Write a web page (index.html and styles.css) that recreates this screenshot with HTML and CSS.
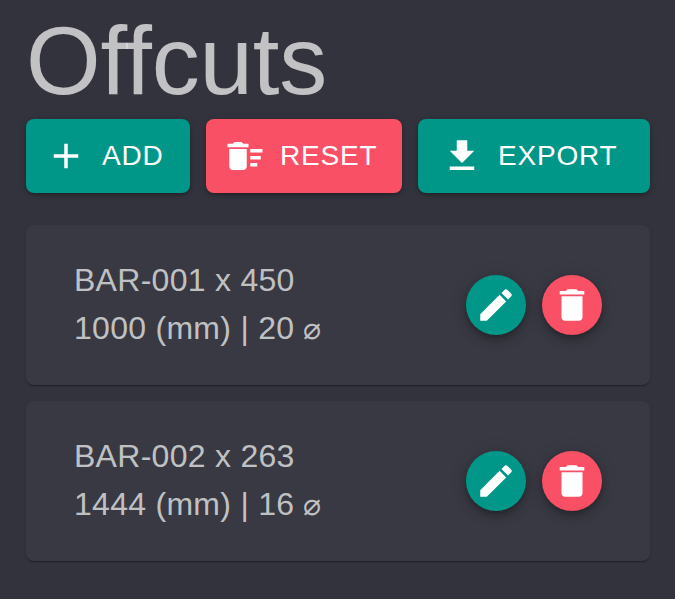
FILE: index.html
```html
<!DOCTYPE html>
<html lang="en">
<head>
<meta charset="utf-8">
<title>Offcuts</title>
<link rel="stylesheet" href="styles.css">
</head>
<body>
<main class="page">
  <h1 class="title">Offcuts</h1>
  <div class="actions">
    <button class="btn btn-teal btn-add"><svg class="icon" viewBox="0 0 24 24"><path d="M19 13h-6v6h-2v-6H5v-2h6V5h2v6h6v2z"/></svg><span>ADD</span></button>
    <button class="btn btn-red btn-reset"><svg class="icon" viewBox="0 0 24 24"><path d="M15 16h4v2h-4zm0-8h7v2h-7zm0 4h6v2h-6zM3 18c0 1.1.9 2 2 2h6c1.1 0 2-.9 2-2V8H3v10zM14 5h-3l-1-1H6L5 5H2v2h12z"/></svg><span>RESET</span></button>
    <button class="btn btn-teal btn-export"><svg class="icon" viewBox="0 0 24 24"><path d="M19 9h-4V3H9v6H5l7 7 7-7zM5 18v2h14v-2H5z"/></svg><span>EXPORT</span></button>
  </div>
  <section class="card">
    <div class="info">
      <div>BAR-001 x 450</div>
      <div>1000 (mm) | 20 <span class="dia">⌀</span></div>
    </div>
    <div class="fabs">
      <button class="fab btn-teal"><svg class="icon" viewBox="0 0 24 24"><path d="M3 17.25V21h3.75L17.81 9.94l-3.75-3.75L3 17.25zM20.71 7.04c.39-.39.39-1.02 0-1.41l-2.34-2.34c-.39-.39-1.02-.39-1.41 0l-1.83 1.83 3.75 3.75 1.83-1.83z"/></svg></button>
      <button class="fab btn-red"><svg class="icon" viewBox="0 0 24 24"><path d="M6 19c0 1.1.9 2 2 2h8c1.1 0 2-.9 2-2V7H6v12zM19 4h-3.5l-1-1h-5l-1 1H5v2h14V4z"/></svg></button>
    </div>
  </section>
  <section class="card">
    <div class="info">
      <div>BAR-002 x 263</div>
      <div>1444 (mm) | 16 <span class="dia">⌀</span></div>
    </div>
    <div class="fabs">
      <button class="fab btn-teal"><svg class="icon" viewBox="0 0 24 24"><path d="M3 17.25V21h3.75L17.81 9.94l-3.75-3.75L3 17.25zM20.71 7.04c.39-.39.39-1.02 0-1.41l-2.34-2.34c-.39-.39-1.02-.39-1.41 0l-1.83 1.83 3.75 3.75 1.83-1.83z"/></svg></button>
      <button class="fab btn-red"><svg class="icon" viewBox="0 0 24 24"><path d="M6 19c0 1.1.9 2 2 2h8c1.1 0 2-.9 2-2V7H6v12zM19 4h-3.5l-1-1h-5l-1 1H5v2h14V4z"/></svg></button>
    </div>
  </section>
</main>
</body>
</html>
```
FILE: styles.css
```css
* { box-sizing: border-box; }
html, body { margin: 0; height: 100%; overflow: hidden; }
body {
  background: #33333d;
  color: rgba(255, 255, 255, 0.7);
  font-family: "Liberation Sans", Arial, sans-serif;
}
.page {
  width: 624px;
  margin-left: 26px;
  display: flex;
  flex-direction: column;
}
.title {
  margin: 0 0 7px;
  padding-top: 5px;
  height: 112px;
  font-size: 96px;
  font-weight: 400;
  line-height: 112px;
  letter-spacing: -0.2px;
}
.actions {
  display: flex;
  gap: 16px;
  margin-bottom: 32px;
}
.btn {
  height: 74px;
  border: 0;
  border-radius: 8px;
  display: flex;
  align-items: center;
  font: inherit;
  font-size: 28px;
  letter-spacing: 0.8px;
  color: #fff;
  box-shadow: 0 3px 3px -2px rgba(0,0,0,.2), 0 2px 4px 0 rgba(0,0,0,.14), 0 1px 8px 0 rgba(0,0,0,.12);
}
.btn-teal { background: #009688; }
.btn-red { background: #fa5066; }
.btn-add { width: 164px; padding: 0 0 0 19px; gap: 15px; }
.btn-reset { width: 196px; padding: 0 0 0 18px; gap: 14px; }
.btn-export { width: 232px; padding: 0 0 0 23px; gap: 15px; }
.icon { width: 42px; height: 42px; fill: #fff; flex: none; display: block; }
.card {
  height: 160px;
  margin-bottom: 16px;
  padding: 0 48px;
  display: flex;
  align-items: center;
  justify-content: space-between;
  background: #383942;
  border-radius: 8px;
  box-shadow: 0 2px 1px -1px rgba(0,0,0,.2), 0 1px 1px 0 rgba(0,0,0,.14), 0 1px 3px 0 rgba(0,0,0,.12);
}
.info { font-size: 32px; line-height: 48px; letter-spacing: 0.28px; padding-bottom: 2px; }
.dia { font-size: 30px; }
.fabs { display: flex; gap: 16px; }
.fab {
  width: 60px;
  height: 60px;
  border: 0;
  padding: 0;
  border-radius: 50%;
  display: flex;
  align-items: center;
  justify-content: center;
  box-shadow: 0 3px 5px -1px rgba(0,0,0,.2), 0 6px 10px 0 rgba(0,0,0,.14), 0 1px 18px 0 rgba(0,0,0,.12);
}
```
